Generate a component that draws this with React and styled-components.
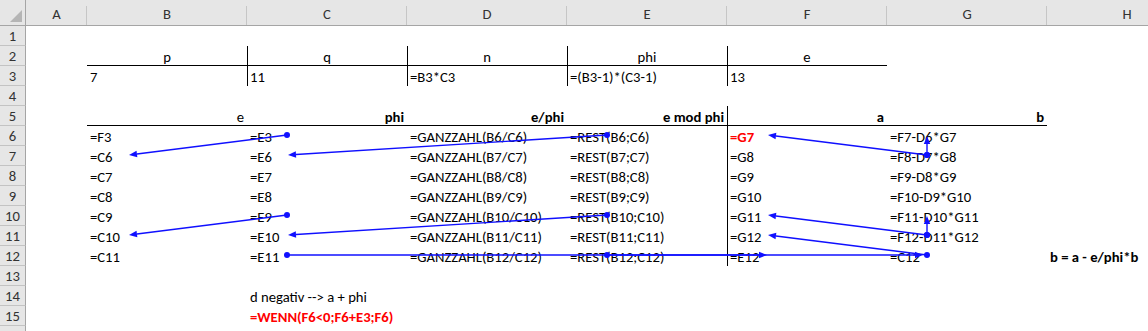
import React from 'react'
import styled, { createGlobalStyle } from 'styled-components'

const GlobalStyle = createGlobalStyle`
  html, body {
    margin: 0;
    padding: 0;
    background: #fff;
    overflow: hidden;
  }
  body {
    font-family: Calibri, Carlito, 'Liberation Sans', Arial, sans-serif;
    font-size: 14.67px;
    color: #000;
  }
`

const COLS = ['A', 'B', 'C', 'D', 'E', 'F', 'G', 'H']
const ROW_COUNT = 16

// cell contents, keyed by address
const cells = {
  B2: { t: 'p', align: 'center' },
  C2: { t: 'q', align: 'center' },
  D2: { t: 'n', align: 'center' },
  E2: { t: 'phi', align: 'center' },
  F2: { t: 'e', align: 'center' },
  B3: { t: '7' },
  C3: { t: '11' },
  D3: { t: '=B3*C3' },
  E3: { t: '=(B3-1)*(C3-1)' },
  F3: { t: '13' },
  B5: { t: 'e', align: 'right' },
  C5: { t: 'phi', align: 'right', bold: true },
  D5: { t: 'e/phi', align: 'right', bold: true },
  E5: { t: 'e mod phi', align: 'right', bold: true },
  F5: { t: 'a', align: 'right', bold: true },
  G5: { t: 'b', align: 'right', bold: true },
  H12: { t: 'b = a - e/phi*b', bold: true },
  C14: { t: 'd negativ --> a + phi' },
  C15: { t: '=WENN(F6<0;F6+E3;F6)', bold: true, red: true },
}

for (let r = 6; r <= 12; r++) {
  cells['B' + r] = { t: r === 6 ? '=F3' : `=C${r - 1}` }
  cells['C' + r] = { t: r === 6 ? '=E3' : `=E${r - 1}` }
  cells['D' + r] = { t: `=GANZZAHL(B${r}/C${r})` }
  cells['E' + r] = { t: `=REST(B${r};C${r})` }
  cells['F' + r] = { t: r === 12 ? '=E12' : `=G${r + 1}` }
  cells['G' + r] = { t: r === 12 ? '=C12' : `=F${r + 1}-D${r}*G${r + 1}` }
}
cells.F6 = { ...cells.F6, bold: true, red: true }

const bottomBorders = ['B2', 'C2', 'D2', 'E2', 'F2', 'B5', 'C5', 'D5', 'E5', 'F5', 'G5']
const leftBorders = ['C2', 'D2', 'E2', 'F2', 'C3', 'D3', 'E3', 'F3', 'F5', 'F6', 'F7', 'F8', 'F9', 'F10', 'F11', 'F12']

// tracer arrows: [fromX, fromY, toX, toY]
const arrows = [
  [287, 135, 129, 155],
  [607, 135, 288, 155],
  [287, 215, 129, 235],
  [607, 215, 288, 235],
  [927, 155, 768, 135],
  [927, 155, 927, 136],
  [927, 235, 768, 215],
  [927, 235, 927, 216],
  [927, 255, 768, 235],
  [287, 255, 923, 255],
  [607, 255, 767, 255],
]

const Wrapper = styled.div`
  position: relative;
  width: 100vw;
  height: 331px;
  overflow: hidden;
`

const Sheet = styled.div`
  display: grid;
  grid-template-columns: 26px 61px repeat(7, 160px);
  grid-template-rows: 26px repeat(${ROW_COUNT}, 20px);
`

const Corner = styled.div`
  position: relative;
  background: #e6e6e6;
  border-right: 1px solid #a5a5a5;
  border-bottom: 1px solid #a5a5a5;
  box-sizing: border-box;

  &::after {
    content: '';
    position: absolute;
    left: 10px;
    top: 10px;
    width: 12px;
    height: 12px;
    background: #b5b5b5;
    clip-path: polygon(100% 0, 100% 100%, 0 100%);
  }
`

const ColHead = styled.div`
  position: relative;
  background: #e6e6e6;
  border-bottom: 1px solid #a5a5a5;
  box-sizing: border-box;
  display: flex;
  align-items: center;
  justify-content: center;
  color: #333;
  padding-top: 2px;

  &::after {
    content: '';
    position: absolute;
    right: 0;
    top: 6px;
    bottom: 0;
    width: 1px;
    background: #c6c6c6;
  }
`

const RowHead = styled.div`
  background: #e6e6e6;
  border-right: 1px solid #a5a5a5;
  border-bottom: 1px solid #c3c3c3;
  box-sizing: border-box;
  display: flex;
  align-items: center;
  justify-content: center;
  color: #333;
  line-height: 20px;
`

const Cell = styled.div`
  box-sizing: border-box;
  padding: 2px 3px 0;
  line-height: 18px;
  white-space: nowrap;
  overflow: visible;
  text-align: ${p => p.$align || 'left'};
  font-weight: ${p => (p.$bold ? 700 : 400)};
  color: ${p => (p.$red ? '#ff0000' : '#000')};
  border-bottom: ${p => (p.$bottom ? '1px solid #000' : '0')};
  border-left: ${p => (p.$left ? '1px solid #000' : '0')};
  padding-left: ${p => (p.$left ? '2px' : '3px')};
`

const Overlay = styled.svg`
  position: absolute;
  left: 0;
  top: 0;
  pointer-events: none;
`

function Arrow({ from, to }) {
  const [x1, y1] = from
  const [x2, y2] = to
  const len = Math.hypot(x2 - x1, y2 - y1)
  const ux = (x2 - x1) / len
  const uy = (y2 - y1) / len
  const head = 8
  const half = 3.2
  const bx = x2 - ux * head
  const by = y2 - uy * head
  const pts = [
    [x2, y2],
    [bx - uy * half, by + ux * half],
    [bx + uy * half, by - ux * half],
  ]
  return (
    <g>
      <line x1={x1} y1={y1} x2={bx} y2={by} stroke="#1010ff" strokeWidth="1.4" />
      <polygon points={pts.map(p => p.join(',')).join(' ')} fill="#1010ff" />
      <circle cx={x1} cy={y1} r="3" fill="#1010ff" />
    </g>
  )
}

export default function App() {
  const rows = Array.from({ length: ROW_COUNT }, (_, i) => i + 1)
  return (
    <Wrapper>
      <GlobalStyle />
      <Sheet>
        <Corner />
        {COLS.map(c => (
          <ColHead key={c}>{c}</ColHead>
        ))}
        {rows.map(r => (
          <React.Fragment key={r}>
            {/* last row only peeks in at the bottom edge, its number is out of view */}
            <RowHead>{r < ROW_COUNT ? r : ''}</RowHead>
            {COLS.map(c => {
              const addr = c + r
              const cell = cells[addr] || {}
              return (
                <Cell
                  key={addr}
                  $align={cell.align}
                  $bold={cell.bold}
                  $red={cell.red}
                  $bottom={bottomBorders.includes(addr)}
                  $left={leftBorders.includes(addr)}
                >
                  {cell.t}
                </Cell>
              )
            })}
          </React.Fragment>
        ))}
      </Sheet>
      <Overlay width="1148" height="331">
        {arrows.map((a, i) => (
          <Arrow key={i} from={[a[0], a[1]]} to={[a[2], a[3]]} />
        ))}
      </Overlay>
    </Wrapper>
  )
}
